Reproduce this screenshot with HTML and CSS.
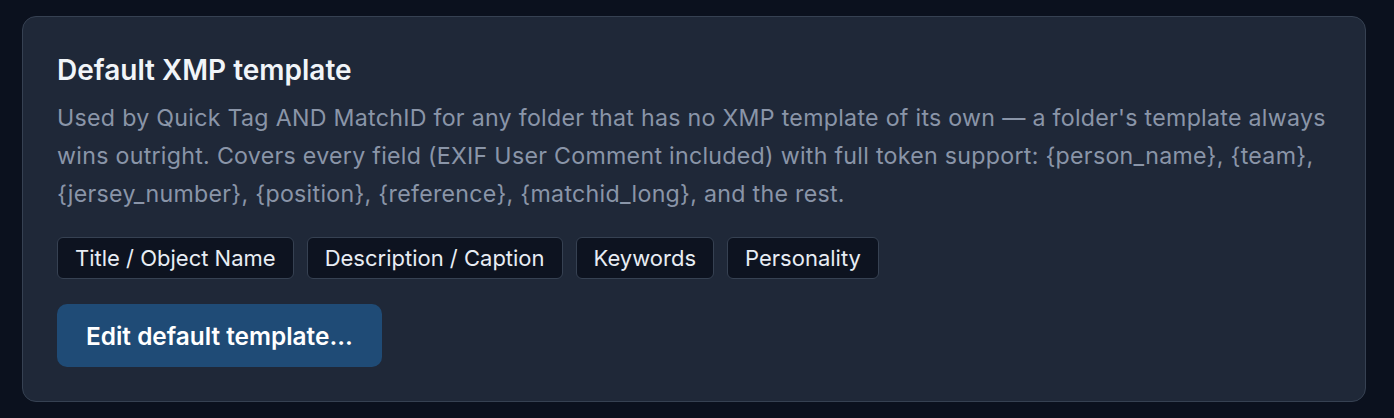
FILE: index.html
```html
<!DOCTYPE html>
<html lang="en">
<head>
<meta charset="utf-8">
<title>Default XMP template</title>
<link rel="stylesheet" href="styles.css">
</head>
<body>
<section class="card">
  <h2 class="card-title">Default XMP template</h2>
  <p class="card-desc">Used by Quick Tag AND MatchID for any folder that has no XMP template of its own — a folder's template always wins outright. Covers every field (EXIF User Comment included) with full token support: {person_name}, {team}, {jersey_number}, {position}, {reference}, {matchid_long}, and the rest.</p>
  <div class="chips">
    <span class="chip">Title / Object Name</span>
    <span class="chip">Description / Caption</span>
    <span class="chip">Keywords</span>
    <span class="chip">Personality</span>
  </div>
  <button class="btn-primary" type="button">Edit default template…</button>
</section>
</body>
</html>
```

FILE: styles.css
```css
html, body {
  margin: 0;
  padding: 0;
  background: #0b111e;
}
body {
  padding: 16px 28px 16px 22px;
  font-family: Inter, "Noto Sans", "Liberation Sans", sans-serif;
  color: #e2e8f0;
}
.card {
  background: #1f2838;
  border: 1px solid #364152;
  border-radius: 14px;
  padding: 36px 34px 33px 34px;
  box-sizing: border-box;
  height: 386px;
}
.card-title {
  margin: 0;
  font-size: 28px;
  line-height: 34px;
  font-weight: 600;
  color: #f1f5f9;
}
.card-desc {
  margin: 12px 0 0 0;
  font-size: 23.2px;
  letter-spacing: 0.28px;
  line-height: 38px;
  color: #8a95a8;
}
.chips {
  display: flex;
  gap: 13px;
  margin-top: 24px;
}
.chip {
  display: inline-flex;
  align-items: center;
  height: 42px;
  box-sizing: border-box;
  padding: 0 17px;
  background: #0d1320;
  border: 1px solid #364152;
  border-radius: 6px;
  font-size: 22px;
  color: #e8edf4;
}
.btn-primary {
  display: block;
  margin-top: 25px;
  height: 63px;
  padding: 0 29px;
  background: #1f4b76;
  border: none;
  border-radius: 10px;
  font-family: inherit;
  font-size: 24.4px;
  font-weight: 600;
  color: #ffffff;
}
```
